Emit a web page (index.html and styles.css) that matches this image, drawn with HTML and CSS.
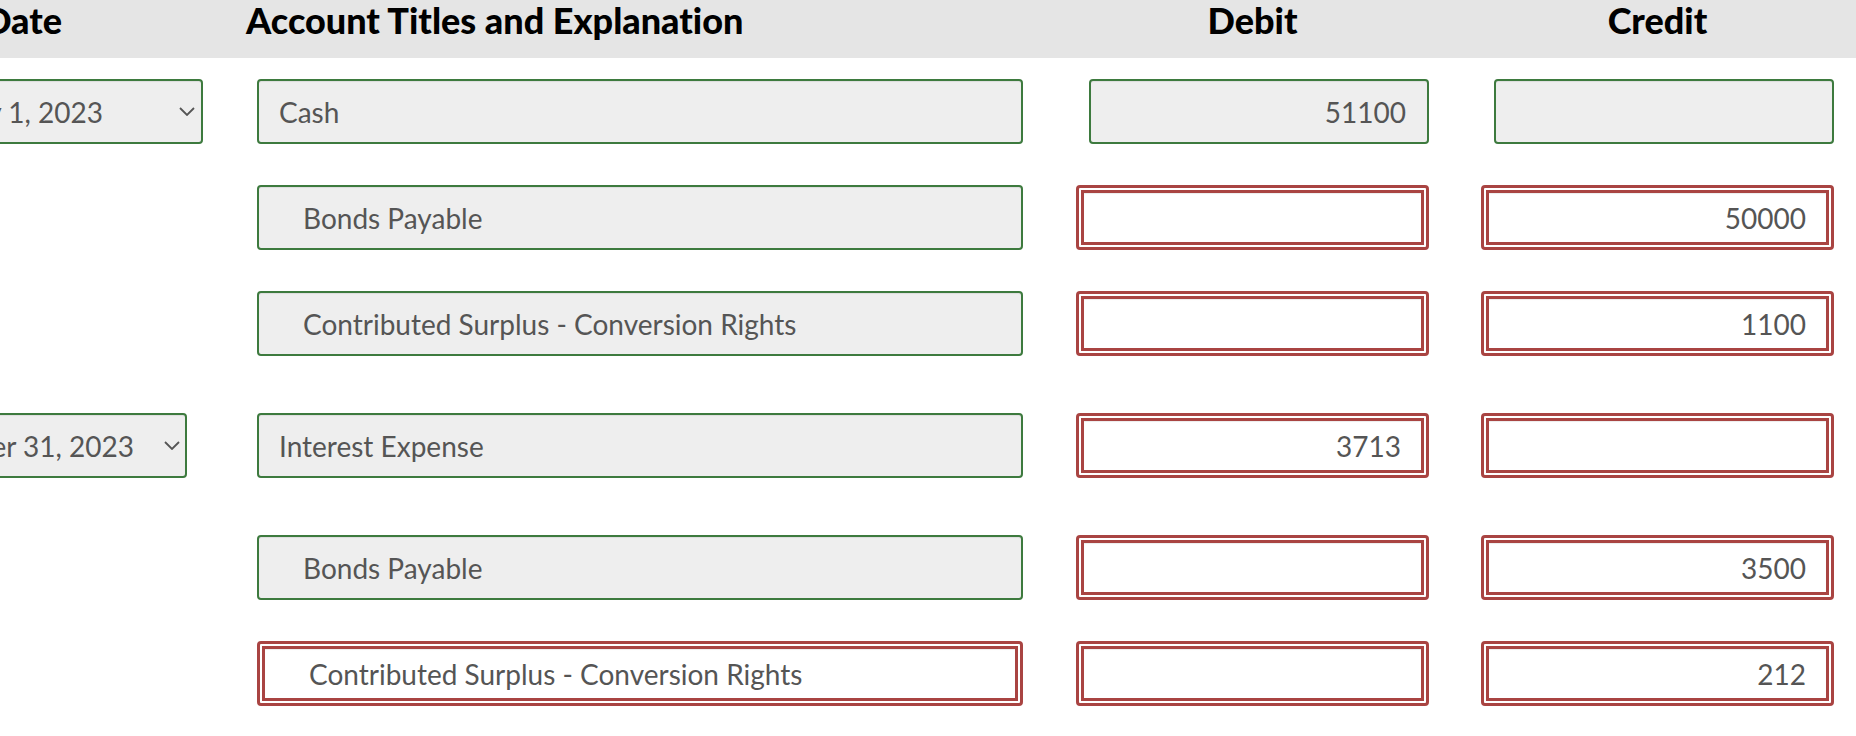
FILE: index.html
```html
<!DOCTYPE html>
<html lang="en">
<head>
<meta charset="utf-8">
<title>Journal Entry</title>
<link rel="stylesheet" href="styles.css">
</head>
<body>
<div class="sheet">
  <div class="head">
    <div class="head__cell head__cell--date">Date</div>
    <div class="head__cell head__cell--account">Account Titles and Explanation</div>
    <div class="head__cell head__cell--debit">Debit</div>
    <div class="head__cell head__cell--credit">Credit</div>
  </div>

  <div class="row row--first">
    <div class="cell cell--date">
      <div class="select select--jan">
        <span class="select__text">January 1, 2023</span>
        <svg class="select__chev" viewBox="0 0 16 9" width="16" height="9"><polyline points="1,1 8,8 15,1"/></svg>
      </div>
    </div>
    <div class="cell cell--account"><div class="field">Cash</div></div>
    <div class="cell cell--debit"><div class="field field--num">51100</div></div>
    <div class="cell cell--credit"><div class="field field--num"></div></div>
  </div>

  <div class="row">
    <div class="cell cell--date"></div>
    <div class="cell cell--account"><div class="field field--indent">Bonds Payable</div></div>
    <div class="cell cell--debit"><div class="field field--error field--num"><div class="field__inner"></div></div></div>
    <div class="cell cell--credit"><div class="field field--error field--num"><div class="field__inner">50000</div></div></div>
  </div>

  <div class="row">
    <div class="cell cell--date"></div>
    <div class="cell cell--account"><div class="field field--indent">Contributed Surplus - Conversion Rights</div></div>
    <div class="cell cell--debit"><div class="field field--error field--num"><div class="field__inner"></div></div></div>
    <div class="cell cell--credit"><div class="field field--error field--num"><div class="field__inner">1100</div></div></div>
  </div>

  <div class="row row--wide">
    <div class="cell cell--date">
      <div class="select select--dec">
        <span class="select__text">December 31, 2023</span>
        <svg class="select__chev" viewBox="0 0 16 9" width="16" height="9"><polyline points="1,1 8,8 15,1"/></svg>
      </div>
    </div>
    <div class="cell cell--account"><div class="field">Interest Expense</div></div>
    <div class="cell cell--debit"><div class="field field--error field--num"><div class="field__inner">3713</div></div></div>
    <div class="cell cell--credit"><div class="field field--error field--num"><div class="field__inner"></div></div></div>
  </div>

  <div class="row row--wide">
    <div class="cell cell--date"></div>
    <div class="cell cell--account"><div class="field field--indent">Bonds Payable</div></div>
    <div class="cell cell--debit"><div class="field field--error field--num"><div class="field__inner"></div></div></div>
    <div class="cell cell--credit"><div class="field field--error field--num"><div class="field__inner">3500</div></div></div>
  </div>

  <div class="row">
    <div class="cell cell--date"></div>
    <div class="cell cell--account"><div class="field field--error field--indent"><div class="field__inner">Contributed Surplus - Conversion Rights</div></div></div>
    <div class="cell cell--debit"><div class="field field--error field--num"><div class="field__inner"></div></div></div>
    <div class="cell cell--credit"><div class="field field--error field--num"><div class="field__inner">212</div></div></div>
  </div>
</div>
</body>
</html>
```

FILE: styles.css
```css
html, body {
  margin: 0;
  padding: 0;
  background: #ffffff;
  overflow: hidden;
}

body {
  width: 1856px;
  height: 736px;
  font-family: "Lato", "Noto Sans", sans-serif;
  font-variant-ligatures: none;
  color: #555555;
}

.sheet {
  width: 2064px;
  margin-left: -208px;
}

.head,
.row {
  display: grid;
  grid-template-columns: 454px 777px 406px 405px 22px;
}

.head {
  height: 58px;
  background: #e5e5e5;
  font-family: "Lato", "DejaVu Sans", sans-serif;
  font-weight: 900;
  font-size: 36px;
  line-height: 40px;
  color: #000000;
}

.head__cell {
  white-space: nowrap;
}

.head__cell--date {
  text-align: right;
  padding-right: 184px;
}

.head__cell--account {
  text-align: left;
}

.head__cell--debit {
  padding-left: 53px;
  text-align: center;
}

.head__cell--credit {
  padding-left: 52px;
  text-align: center;
}

.row {
  height: 65px;
  margin-top: 41px;
}

.row--first {
  margin-top: 21px;
}

.row--wide {
  margin-top: 57px;
}

.cell {
  display: flex;
  min-width: 0;
}

.cell--account {
  padding-left: 11px;
}

.cell--debit {
  padding-left: 53px;
  justify-content: flex-end;
}

.cell--credit {
  padding-left: 52px;
  justify-content: flex-end;
}

.select {
  flex: 1;
  box-sizing: border-box;
  height: 65px;
  display: flex;
  align-items: center;
  justify-content: flex-end;
  border: 2px solid #3d7a3e;
  border-radius: 4px;
  background: #eeeeee;
  box-shadow: inset 0 1px 1px rgba(0, 0, 0, 0.075);
  font-size: 28px;
  white-space: nowrap;
}

.select__chev {
  fill: none;
  stroke: #555555;
  stroke-width: 1.8;
}

.select--jan {
  margin-right: 43px;
  padding-right: 6px;
}

.select--jan .select__chev {
  margin-left: 76px;
}

.select--dec {
  margin-right: 59px;
  padding-right: 5px;
}

.select--dec .select__chev {
  margin-left: 30px;
}

.field {
  box-sizing: border-box;
  width: 100%;
  height: 65px;
  display: flex;
  align-items: center;
  padding: 0 21px 0 20px;
  border: 2px solid #3d7a3e;
  border-radius: 4px;
  background: #eeeeee;
  box-shadow: inset 0 1px 1px rgba(0, 0, 0, 0.075);
  font-size: 28px;
  white-space: nowrap;
}

.field--indent {
  padding-left: 44px;
}

.field--num {
  width: 340px;
  justify-content: flex-end;
}

.field--error {
  padding: 2px;
  border: 3px solid #a94442;
  background: #ffffff;
  box-shadow: none;
}

.field--error.field--num {
  width: 353px;
}

.field__inner {
  box-sizing: border-box;
  flex: 1;
  height: 100%;
  display: flex;
  align-items: center;
  padding: 0 20px;
  border: 3px solid #a94442;
  background: #ffffff;
  box-shadow: inset 0 1px 1px rgba(0, 0, 0, 0.075);
}

.field--num .field__inner {
  justify-content: flex-end;
}

.field--indent .field__inner {
  padding-left: 44px;
}
```
